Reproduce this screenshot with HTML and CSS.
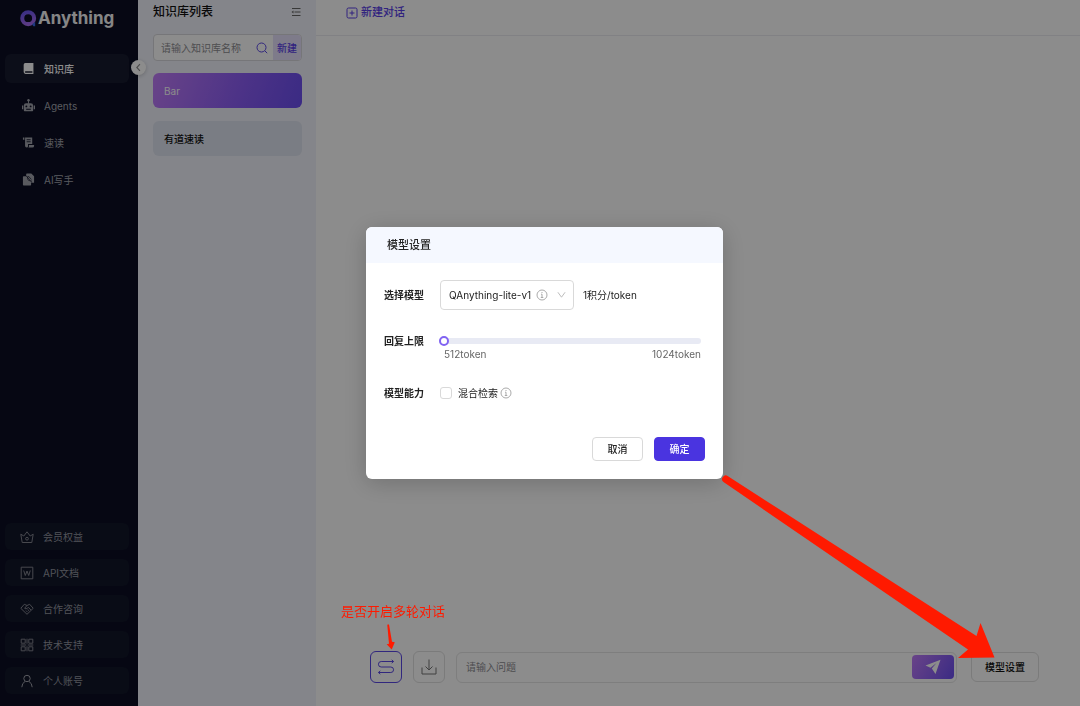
FILE: index.html
```html
<!DOCTYPE html>
<html lang="zh-CN">
<head>
<meta charset="utf-8">
<title>QAnything</title>
<link rel="stylesheet" href="styles.css">
</head>
<body>
<div class="app">
  <aside class="sidebar">
    <div class="logo">
      <svg class="logo-mark" viewBox="0 0 16 16" aria-hidden="true">
        <defs><linearGradient id="lg" x1="0.3" y1="0" x2="0.6" y2="1"><stop offset="0" stop-color="#6f58f0"/><stop offset="1" stop-color="#a86cf0"/></linearGradient></defs>
        <circle cx="7.7" cy="7.7" r="5.600" fill="none" stroke="url(#lg)" stroke-width="3.800"/>
        <path d="M11.300 13.300 14.300 11.300V15.300H12.600Z" fill="#3568e8"/>
      </svg>
      <span>Anything</span>
    </div>
    <nav class="nav">
      <a class="nav-item active" href="#">
        <svg viewBox="0 0 14 14" fill="currentColor" aria-hidden="true"><path fill-rule="evenodd" d="M3.500 1.200H12.300V12.800H3.700A1.900 1.900 0 0 1 1.800 10.900V2.900A1.700 1.700 0 0 1 3.500 1.200ZM3.900 10a.8.8 0 0 0 0 1.600H11.200V10Z"/></svg>
        <span>知识库</span></a>
      <a class="nav-item" href="#">
        <svg viewBox="0 0 14 14" fill="currentColor" aria-hidden="true"><circle cx="7" cy="1.400" r="1.300"/><path d="M6.500 2h1v3h-1zM0 7h1.400v4H0zM12.600 7H14v4h-1.400z"/><path fill-rule="evenodd" d="M4.500 4.500h5A2.500 2.500 0 0 1 12 7v5.500q0 .8-.8.8H2.800q-.8 0-.8-.8V7a2.500 2.500 0 0 1 2.500-2.500ZM4.700 7a1 1 0 1 0 0 2 1 1 0 0 0 0-2Zm4.600 0a1 1 0 1 0 0 2 1 1 0 0 0 0-2ZM4.500 10.500v1h5v-1Z"/></svg>
        <span>Agents</span></a>
      <a class="nav-item" href="#">
        <svg viewBox="0 0 14 14" fill="currentColor" aria-hidden="true"><path d="M1 1.500h1.600v2.600H1zM5 12.500a2 2 0 0 1-1.700-2V1.500H11v7H6.500V11q0 1.500-1.500 1.500Z"/><path d="M7.500 9.700H13v1.100a1.700 1.700 0 0 1-1.700 1.700H6.800q.7-.6.7-1.500Z"/><path d="M5 4h4.300M5 6.200h4.300" stroke="#0b0e24" stroke-width=".9"/></svg>
        <span>速读</span></a>
      <a class="nav-item" href="#">
        <svg viewBox="0 0 14 14" fill="currentColor" aria-hidden="true"><path d="M5.300.5h4.700L13 3.500v7H10V6.500L7 3.300H4.500V1.300q0-.8.8-.8Z"/><path d="M1.800 3.500H6.500L9.800 7v5.700q0 .8-.8.8H1.800q-.8 0-.8-.8V4.300q0-.8.800-.8Z"/><path d="M4.500 3 10.300 9.800M6 4.200q-1 3.800 3.300 4.300" fill="none" stroke="#0b0e24" stroke-width=".7"/></svg>
        <span>AI写手</span></a>
    </nav>
    <nav class="links">
      <a class="link-item" href="#">
        <svg class="line-icon" viewBox="0 0 14 14" aria-hidden="true"><path d="M.8 4.200 3.800 6 7 1.800 10.200 6l3-1.800-1.400 8.300H2.200Z"/><circle cx="7" cy="8.700" r="1.400"/></svg>
        <span>会员权益</span></a>
      <a class="link-item" href="#">
        <svg class="line-icon" viewBox="0 0 14 14" aria-hidden="true"><path d="M1.200 1.200h11.600v11.600H1.200zM3.700 4.500 5.300 9.500 7 5l1.700 4.500 1.600-5"/></svg>
        <span>API文档</span></a>
      <a class="link-item" href="#">
        <svg class="line-icon" viewBox="0 0 14 14" aria-hidden="true"><path d="M7 12.300.8 6.300 4.300 2.300 7 3.500 9.700 2.300l3.500 4ZM7 3.500 4.600 6.300q1.400 1.300 2.900-.3l1.200-.5 2.300 2.600M6 8.600l1.600 1.600M7.600 7.400l1.600 1.500"/></svg>
        <span>合作咨询</span></a>
      <a class="link-item" href="#">
        <svg class="line-icon" viewBox="0 0 14 14" aria-hidden="true"><path d="M1.200 1.200h4v4h-4zM8.800 1.200h4v4h-4zM1.200 8.800h4v4h-4zM8.800 8.800h4v4h-4zM7 .7v5M7 8.300v5M.7 7h5.600M7.700 7h5.600"/></svg>
        <span>技术支持</span></a>
      <a class="link-item" href="#">
        <svg class="line-icon bright" viewBox="0 0 14 14" aria-hidden="true"><circle cx="7" cy="4.500" r="3.200"/><path d="M1.800 13.200q.3-4.300 3.200-5.700M12.200 13.200q-.3-4.300-3.200-5.700"/></svg>
        <span>个人账号</span></a>
    </nav>
    <button class="collapse" type="button" aria-label="收起">
      <svg viewBox="0 0 8 8" aria-hidden="true"><path d="M5.300 1 2.500 4l2.800 3"/></svg>
    </button>
  </aside>

  <section class="panel">
    <header class="panel-head">
      <h1>知识库列表</h1>
      <svg class="fold" viewBox="0 0 10 10" aria-hidden="true"><path d="M1 1.500h8.500M3.500 5h6M1 8.500h8.500"/><path class="tip" d="M2.500 3.500v3L.5 5Z"/></svg>
    </header>
    <div class="search">
      <input type="text" placeholder="请输入知识库名称" aria-label="知识库名称">
      <button class="search-go" type="button" aria-label="搜索"><svg viewBox="0 0 12 12" aria-hidden="true"><circle cx="5.500" cy="5.500" r="4.500"/><path d="m8.800 8.800 2.400 2.400"/></svg></button>
      <button class="search-new" type="button">新建</button>
    </div>
    <a class="kb selected" href="#">Bar</a>
    <a class="kb" href="#">有道速读</a>
  </section>

  <main class="main">
    <header class="main-head">
      <button class="new-chat" type="button">
        <svg viewBox="0 0 12 12" aria-hidden="true"><rect x="1" y="1" width="10" height="10" rx="1.500"/><path d="M6 3.500v5M3.500 6h5"/></svg>
        <span>新建对话</span></button>
    </header>
    <div class="composer">
      <button class="tool on" type="button" aria-label="多轮对话"><svg viewBox="0 0 18 18" aria-hidden="true"><path d="M16.500 3.500H4.200a2.750 2.750 0 0 0 0 5.500h9.600a2.750 2.750 0 0 1 0 5.500H1.500M14.700 1.900 16.600 3.500 14.700 5.100M3.300 12.900 1.400 14.500 3.300 16.100"/></svg></button>
      <button class="tool" type="button" aria-label="下载"><svg viewBox="0 0 18 18" aria-hidden="true"><path d="M2 9.500V16h14V9.500M9 1.500v10.300M5.500 8.500 9 12l3.500-3.500"/></svg></button>
      <div class="ask">
        <input type="text" placeholder="请输入问题" aria-label="问题">
        <button class="send" type="button" aria-label="发送"><svg viewBox="0 0 16 16" aria-hidden="true"><path d="M15.500.8.500 6.600l5 2.200 6-4.700-4.700 5.500L10.500 15Z"/></svg></button>
      </div>
      <button class="model-btn" type="button">模型设置</button>
    </div>
  </main>
</div>

<div class="mask">
  <form class="dialog" role="dialog" aria-labelledby="dlg-title">
    <h2 id="dlg-title">模型设置</h2>
    <div class="dialog-body">
      <div class="row">
        <label class="name" for="model">选择模型</label>
        <div class="select-wrap">
          <select id="model"><option>QAnything-lite-v1</option></select>
          <svg class="info in-select" viewBox="0 0 12 12" aria-hidden="true"><circle cx="6" cy="6" r="5"/><path d="M5 5.200h1v3.300M4.800 8.500h2.500M6 3v1"/></svg>
          <svg class="chevron" viewBox="0 0 10 10" aria-hidden="true"><path d="M1 2.500 5 8l4-5.500"/></svg>
        </div>
        <span class="price">1积分/token</span>
      </div>
      <div class="row slider-row">
        <label class="name" for="limit">回复上限</label>
        <div class="slider">
          <input id="limit" type="range" min="512" max="1024" value="512">
          <div class="marks"><span>512token</span><span>1024token</span></div>
        </div>
      </div>
      <div class="row">
        <span class="name">模型能力</span>
        <label class="check"><input type="checkbox"><span>混合检索</span></label>
        <svg class="info" viewBox="0 0 12 12" aria-hidden="true"><circle cx="6" cy="6" r="5"/><path d="M5 5.200h1v3.300M4.800 8.500h2.500M6 3v1"/></svg>
      </div>
    </div>
    <footer class="dialog-foot">
      <button type="button" class="btn">取消</button>
      <button type="button" class="btn primary">确定</button>
    </footer>
  </form>
</div>

<p class="note">是否开启多轮对话</p>
<svg class="arrows" viewBox="0 0 1080 706" aria-hidden="true">
  <path d="M728 476.300 976.500 636 980.500 623 994.500 657.500 958 658 968 649.500 723.500 482A3.300 3.300 0 0 1 728 476.300Z"/>
  <path d="M387.300 625q.8-1.400 1.800 0L392 641.700l2.800.5-3.100 7.200-5-5.200 2.300-.5Z"/>
</svg>
</body>
</html>
```

FILE: styles.css
```css
* { box-sizing: border-box; }

body {
  margin: 0;
  position: relative;
  font-family: Inter, "Noto Sans CJK SC", sans-serif;
  font-size: 10px;
  line-height: 16px;
  color: #222;
}

h1, h2, p { margin: 0; }
a { color: inherit; text-decoration: none; }
button, input, select { font: inherit; color: inherit; }
button { padding: 0; border: 0; background: none; }
svg { display: block; flex: none; }

.app { display: flex; min-height: 100vh; }

/* Sidebar */
.sidebar {
  position: relative;
  flex: none;
  width: 138px;
  display: flex;
  flex-direction: column;
  padding: 6px 9px 12px 5px;
  background: #0b0e24;
}
.logo {
  display: flex;
  align-items: center;
  gap: 1px;
  padding-left: 15px;
  margin-bottom: 24px;
  font-size: 17px;
  line-height: 24px;
  font-weight: 700;
  color: #f4f4f4;
}
.logo-mark { width: 17px; height: 17px; }
.nav { display: flex; flex-direction: column; gap: 8px; }
.nav-item {
  display: flex;
  align-items: center;
  gap: 9px;
  height: 29px;
  padding-left: 17px;
  border-radius: 6px;
  color: #a2a4ad;
}
.nav-item svg { width: 13px; height: 13px; }
.nav-item.active { background: #171a2e; color: #fff; font-weight: 500; }
.links { display: flex; flex-direction: column; gap: 9px; margin-top: auto; }
.link-item {
  display: flex;
  align-items: center;
  gap: 9px;
  height: 27px;
  padding-left: 15px;
  border-radius: 6px;
  background: #111629;
  color: #9496a0;
}
.line-icon { width: 14px; height: 14px; fill: none; stroke: #83858f; stroke-width: 1; }
.line-icon.bright { stroke: #a2a4ad; }
.collapse {
  position: absolute;
  top: 60px;
  right: -8px;
  width: 15px;
  height: 15px;
  display: grid;
  place-items: center;
  border-radius: 50%;
  background: #fff;
  box-shadow: 0 1px 4px rgba(0, 0, 0, .2);
}
.collapse svg { width: 9px; height: 9px; fill: none; stroke: #888; stroke-width: 1; }

/* Knowledge base list */
.panel {
  flex: none;
  width: 178px;
  display: flex;
  flex-direction: column;
  padding: 4px 14px 0 15px;
  background: #f1f3fb;
}
.panel-head { display: flex; align-items: center; justify-content: space-between; margin-bottom: 14px; }
.panel-head h1 { font-size: 12px; line-height: 16px; font-weight: 500; color: #111; }
.fold { width: 10px; height: 10px; margin-right: 1px; fill: none; stroke: #666; stroke-width: 1; }
.fold .tip { fill: #666; stroke: none; }
.search {
  display: flex;
  height: 27px;
  margin-bottom: 12px;
  border: 1px solid #d8d8dc;
  border-radius: 4px;
  background: #fff;
  overflow: hidden;
}
.search input { flex: 1; min-width: 0; padding: 0 0 0 7px; border: 0; background: none; }
input::placeholder { color: #8e8e92; opacity: 1; }
.search-go { width: 22px; display: grid; place-items: center; }
.search-go svg { width: 12px; height: 12px; fill: none; stroke: #5a47e5; stroke-width: 1; }
.search-new { width: 28px; background: #e6e1fb; color: #5a3fe8; font-weight: 500; }
.kb {
  display: flex;
  align-items: center;
  height: 35px;
  margin-bottom: 13px;
  padding-left: 11px;
  border-radius: 6px;
  background: #dfe4f0;
  color: #111;
  font-weight: 500;
}
.kb.selected { background: linear-gradient(110deg, #c07cf8, #8a5cf6 60%, #6b4ef0); color: #fff; font-weight: 400; }

/* Chat area */
.main { flex: 1; min-width: 0; display: flex; flex-direction: column; background: #fff; }
.main-head { height: 36px; padding: 4px 30px; border-bottom: 1px solid #ececf0; }
.new-chat { display: flex; align-items: center; gap: 3px; color: #5a3fe8; font-size: 11px; line-height: 17px; font-weight: 500; }
.new-chat svg { width: 12px; height: 12px; fill: none; stroke: currentColor; stroke-width: 1; }
.composer { display: flex; align-items: center; margin-top: auto; padding: 0 41px 23px 54px; }
.tool {
  width: 32px;
  height: 32px;
  margin-right: 11px;
  display: grid;
  place-items: center;
  border: 1px solid #e0e0e0;
  border-radius: 6px;
}
.tool svg { width: 18px; height: 18px; fill: none; stroke: #777; stroke-width: 1; }
.tool.on { border-color: #5a47e5; }
.tool.on svg { stroke: #5a47e5; }
.ask {
  flex: 1;
  min-width: 0;
  display: flex;
  align-items: center;
  height: 31px;
  padding-right: 2px;
  border: 1px solid #e5e5e5;
  border-radius: 6px;
}
.ask input { flex: 1; min-width: 0; padding: 0 9px; border: 0; background: none; }
.send {
  width: 42px;
  height: 24px;
  display: grid;
  place-items: center;
  border-radius: 4px;
  background: linear-gradient(120deg, #c07cf8, #6b4ef0);
}
.send svg { width: 16px; height: 16px; fill: #fff; }
.model-btn {
  width: 68px;
  height: 30px;
  margin-left: 14px;
  border: 1px solid #e0e0e0;
  border-radius: 6px;
  color: #111;
  font-weight: 500;
}

/* Dialog */
.mask {
  position: fixed;
  inset: 0;
  display: grid;
  place-items: center;
  padding-left: 9px;
  background: rgba(0, 0, 0, .45);
}
.dialog {
  width: 357px;
  border-radius: 6px;
  background: #fff;
  overflow: hidden;
  box-shadow: 0 4px 24px rgba(0, 0, 0, .2);
}
.dialog h2 { padding: 10px 21px; background: #f5f8ff; font-size: 11px; line-height: 16px; font-weight: 500; }
.dialog-body { display: flex; flex-direction: column; padding: 17px 22px 0 18px; }
.row { display: flex; align-items: center; }
.name { flex: none; width: 56px; font-size: 10px; font-weight: 700; }
.select-wrap { position: relative; width: 134px; }
select {
  display: block;
  width: 100%;
  height: 30px;
  padding: 0 8px;
  appearance: none;
  border: 1px solid #d9d9d9;
  border-radius: 4px;
  background: #fff;
}
.info { width: 12px; height: 12px; fill: none; stroke: #aaa; stroke-width: 1; }
.in-select { position: absolute; top: 9px; right: 26px; }
.chevron { position: absolute; top: 10px; right: 8px; width: 9px; height: 9px; fill: none; stroke: #b5b5b5; stroke-width: 1; }
.price { margin-left: 9px; }
.slider-row { align-items: flex-start; margin: 23px 0 25px; }
.slider { flex: 1; min-width: 0; margin-left: -1px; }
input[type="range"] {
  display: block;
  width: 100%;
  height: 15px;
  margin: 0;
  appearance: none;
  background: none;
}
input[type="range"]::-webkit-slider-runnable-track { height: 6px; border-radius: 3px; background: #e8eaf4; }
input[type="range"]::-webkit-slider-thumb {
  appearance: none;
  width: 10px;
  height: 10px;
  margin-top: -2px;
  border: 2px solid #8163f2;
  border-radius: 50%;
  background: #fff;
}
.marks { display: flex; justify-content: space-between; padding-left: 5px; line-height: 12px; color: #666; }
.check { display: flex; align-items: center; gap: 6px; margin-right: 2px; }
.check input {
  width: 12px;
  height: 12px;
  margin: 0;
  appearance: none;
  border: 1px solid #d9d9d9;
  border-radius: 3px;
}
.dialog-foot { display: flex; justify-content: flex-end; gap: 11px; padding: 36px 18px 18px; }
.btn { width: 51px; height: 24px; border: 1px solid #d9d9d9; border-radius: 4px; background: #fff; font-weight: 500; }
.btn.primary { border-color: #4a34e0; background: #4a34e0; color: #fff; }

/* Annotations over the page */
.note {
  position: absolute;
  left: 341px;
  bottom: 85px;
  font-size: 13px;
  line-height: 20px;
  color: #ff1a00;
}
.arrows { position: absolute; top: 0; left: 0; width: 100%; pointer-events: none; fill: #ff1a00; }
```
